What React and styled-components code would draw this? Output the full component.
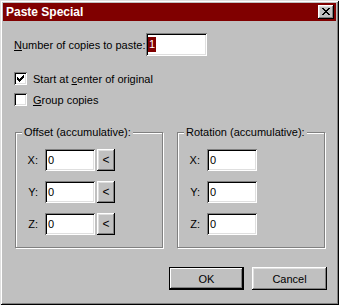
import React from 'react';
import styled, { createGlobalStyle, css } from 'styled-components';

const GlobalStyle = createGlobalStyle`
  html, body {
    margin: 0;
    padding: 0;
    background: #c0c0c0;
  }
  body {
    font-family: "Liberation Sans", Arial, sans-serif;
    font-size: 11px;
    color: #000;
  }
`;

const raised = css`
  box-shadow: inset -1px -1px 0 #000, inset 1px 1px 0 #fff,
    inset -2px -2px 0 #808080, inset 2px 2px 0 #dfdfdf;
`;

const sunken = css`
  box-shadow: inset 1px 1px 0 #808080, inset -1px -1px 0 #fff,
    inset 2px 2px 0 #000, inset -2px -2px 0 #dfdfdf;
`;

const Window = styled.div`
  width: 339px;
  height: 305px;
  box-sizing: border-box;
  padding: 3px;
  background: #c0c0c0;
  box-shadow: inset 1px 1px 0 #dfdfdf, inset -1px -1px 0 #000,
    inset 2px 2px 0 #fff, inset -2px -2px 0 #808080;
  display: flex;
  flex-direction: column;
`;

const TitleBar = styled.div`
  height: 18px;
  flex: none;
  background: #800000;
  color: #fff;
  display: flex;
  align-items: center;
  justify-content: space-between;
  padding: 0 2px 0 3px;
  font-weight: bold;
  font-size: 12px;
`;

const CloseButton = styled.div`
  width: 16px;
  height: 14px;
  background: #c0c0c0;
  ${raised};
  display: flex;
  align-items: center;
  justify-content: center;
  padding-bottom: 1px;
  box-sizing: border-box;
`;

const Body = styled.div`
  flex: 1;
  display: flex;
  flex-direction: column;
  padding: 12px 10px 0 11px;
`;

const CopiesRow = styled.div`
  display: flex;
  align-items: center;
  height: 23px;
`;

const CopiesLabel = styled.div`
  width: 132px;
`;

const Field = styled.div`
  width: ${(p) => p.$w}px;
  height: ${(p) => p.$h || 22}px;
  box-sizing: border-box;
  background: #fff;
  ${sunken};
  padding: 0 3px;
  display: flex;
  align-items: center;
`;

const Selected = styled.span`
  display: inline-block;
  background: #800000;
  color: #fff;
  line-height: 15px;
  padding: 0 1px;
  margin-left: -1px;
`;

const Checks = styled.div`
  margin-top: 16px;
  display: flex;
  flex-direction: column;
  gap: 8px;
`;

const CheckRow = styled.div`
  display: flex;
  align-items: center;
  gap: 6px;
  height: 13px;
`;

const Box = styled.div`
  width: 13px;
  height: 13px;
  box-sizing: border-box;
  background: #fff;
  ${sunken};
  display: flex;
  align-items: center;
  justify-content: center;
`;

const Groups = styled.div`
  margin-top: 20px;
  display: grid;
  grid-template-columns: 148px 148px;
  column-gap: 14px;
  padding-left: 1px;
`;

const Group = styled.fieldset`
  margin: 0;
  min-width: 0;
  padding: 10px 0 12px 10px;
  border: 1px solid #808080;
  box-shadow: inset 1px 1px 0 #fff, 1px 1px 0 #fff;
  display: flex;
  flex-direction: column;
  gap: 10px;
`;

const Legend = styled.legend`
  margin-left: -4px;
  padding: 0 2px;
  background: #c0c0c0;
  line-height: 13px;
`;

const AxisRow = styled.div`
  display: flex;
  align-items: center;
`;

const AxisLabel = styled.span`
  width: 12px;
  margin-right: 7px;
  text-align: right;
`;

const SmallButton = styled.div`
  width: 18px;
  height: 22px;
  margin-left: 2px;
  box-sizing: border-box;
  background: #c0c0c0;
  ${raised};
  display: flex;
  align-items: center;
  justify-content: center;
  font-size: 12px;
`;

const Buttons = styled.div`
  margin-top: 19px;
  display: flex;
  justify-content: flex-end;
  gap: 8px;
  margin-right: -1px;
`;

const Button = styled.div`
  width: 75px;
  height: 23px;
  box-sizing: border-box;
  background: #c0c0c0;
  display: flex;
  align-items: center;
  justify-content: center;
  ${(p) =>
    p.$default
      ? css`
          box-shadow: inset 0 0 0 1px #000, inset -2px -2px 0 #000,
            inset 2px 2px 0 #fff, inset -3px -3px 0 #808080;
        `
      : raised};
`;

const CloseGlyph = () => (
  <svg width="8" height="7" viewBox="0 0 8 7" shapeRendering="crispEdges">
    <path
      d="M0 0h2v1H0zM6 0h2v1H6zM1 1h2v1H1zM5 1h2v1H5zM2 2h4v1H2zM3 3h2v1H3zM2 4h4v1H2zM1 5h2v1H1zM5 5h2v1H5zM0 6h2v1H0zM6 6h2v1H6z"
      fill="#000"
    />
  </svg>
);

const CheckGlyph = () => (
  <svg width="7" height="7" viewBox="0 0 7 7" shapeRendering="crispEdges">
    <path
      d="M6 0h1v3H6zM5 1h1v3H5zM4 2h1v3H4zM3 3h1v3H3zM2 4h1v3H2zM1 3h1v3H1zM0 2h1v3H0z"
      fill="#000"
    />
  </svg>
);

function Axis({ name, withButton }) {
  return (
    <AxisRow>
      <AxisLabel>{name}:</AxisLabel>
      <Field $w={50}>0</Field>
      {withButton && <SmallButton>&lt;</SmallButton>}
    </AxisRow>
  );
}

export default function App() {
  return (
    <>
      <GlobalStyle />
      <Window>
        <TitleBar>
          <span>Paste Special</span>
          <CloseButton>
            <CloseGlyph />
          </CloseButton>
        </TitleBar>
        <Body>
          <CopiesRow>
            <CopiesLabel>
              <u>N</u>umber of copies to paste:
            </CopiesLabel>
            <Field $w={61} $h={23}>
              <Selected>1</Selected>
            </Field>
          </CopiesRow>
          <Checks>
            <CheckRow>
              <Box>
                <CheckGlyph />
              </Box>
              <span>
                Start at <u>c</u>enter of original
              </span>
            </CheckRow>
            <CheckRow>
              <Box />
              <span>
                <u>G</u>roup copies
              </span>
            </CheckRow>
          </Checks>
          <Groups>
            <Group>
              <Legend>Offset (accumulative):</Legend>
              <Axis name="X" withButton />
              <Axis name="Y" withButton />
              <Axis name="Z" withButton />
            </Group>
            <Group>
              <Legend>Rotation (accumulative):</Legend>
              <Axis name="X" />
              <Axis name="Y" />
              <Axis name="Z" />
            </Group>
          </Groups>
          <Buttons>
            <Button $default>OK</Button>
            <Button>Cancel</Button>
          </Buttons>
        </Body>
      </Window>
    </>
  );
}
